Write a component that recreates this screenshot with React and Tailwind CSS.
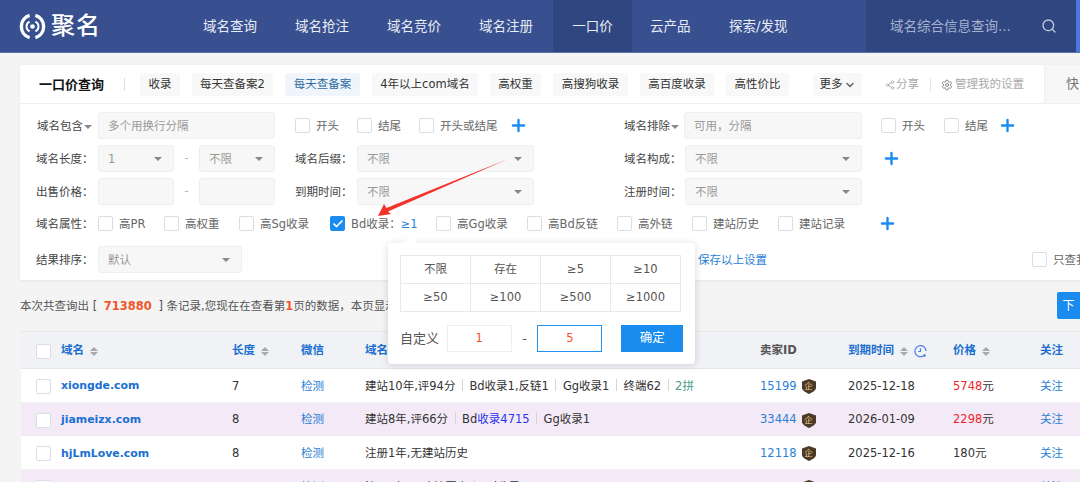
import React from "react";
import { Search, ChevronDown, Share2, Settings, Plus, Check } from "lucide-react";

const FONT = "font-['DejaVu_Sans','Noto_Sans_CJK_SC',sans-serif]";

function Box({ checked }) {
  return checked ? (
    <span className="flex h-[15px] w-[15px] shrink-0 items-center justify-center rounded-[2px] bg-[#1a8cf0]">
      <Check size={12} strokeWidth={3.5} className="text-white" />
    </span>
  ) : (
    <span className="block h-[15px] w-[15px] shrink-0 rounded-[2px] border border-[#d9dee6] bg-white" />
  );
}

function CheckItem({ label, className = "" }) {
  return (
    <span className={`flex items-center gap-[6px] text-[11.5px] text-[#666] ${className}`}>
      <Box />
      <span className="whitespace-nowrap pt-[3px]">{label}</span>
    </span>
  );
}

function Caret({ className = "" }) {
  return <span className={`inline-block h-0 w-0 border-x-[4px] border-t-[4px] border-x-transparent border-t-[#888] ${className}`} />;
}

function Field({ text = "", caret, className = "" }) {
  return (
    <span className={`flex h-[27px] items-center justify-between rounded-[3px] border border-[#eeeeee] bg-[#f7f7f7] pl-[9px] pr-[11px] text-[11.5px] text-[#999] ${className}`}>
      <span className="pt-[2px]">{text}</span>
      {caret && <Caret />}
    </span>
  );
}

function Label({ children, className = "" }) {
  return <span className={`whitespace-nowrap pt-[3px] text-[11.5px] text-[#444] ${className}`}>{children}</span>;
}

function Tag({ children, className = "" }) {
  return (
    <span className={`flex h-[23px] items-center justify-center rounded-[3px] pt-[2px] text-[11.5px] ${className}`}>
      {children}
    </span>
  );
}

function PlusIcon({ className = "" }) {
  return <Plus size={19} strokeWidth={3} className={`shrink-0 text-[#1a8cf0] ${className}`} />;
}

function Sort() {
  return (
    <span className="ml-[6px] inline-flex flex-col gap-[1px]">
      <span className="h-0 w-0 border-x-[4px] border-b-[4px] border-x-transparent border-b-[#aaa]" />
      <span className="h-0 w-0 border-x-[4px] border-t-[4px] border-x-transparent border-t-[#aaa]" />
    </span>
  );
}

function Badge() {
  return (
    <span className="relative ml-[5px] inline-flex h-[15px] w-[14px] items-center justify-center">
      <svg viewBox="0 0 14 15" className="absolute inset-0 h-full w-full">
        <path d="M7 0 L14 2.5 V9 C14 11.5 10 13.5 7 15 C4 13.5 0 11.5 0 9 V2.5 Z" fill="#4b3a28" />
      </svg>
      <span className="relative text-[8.5px] leading-none text-[#e7c48a]">企</span>
    </span>
  );
}

function Sep() {
  return <span className="mx-[6.5px] inline-block h-[12px] w-px bg-[#d5d5d5] align-[-1px]" />;
}

const COLS = "grid grid-cols-[40px_171px_69px_64px_395px_88px_105px_87px_1fr] items-center";

function Row({ name, len, info, id, date, price, alt }) {
  return (
    <div className={`${COLS} h-[33.7px] border-b border-dotted border-[#e4e4e4] pt-[2px] text-[11.5px] text-[#333] ${alt ? "bg-[#f4e9f6]" : "bg-white"}`}>
      <span className="pl-[15px]"><Box /></span>
      <span className="text-[10.9px] font-bold text-[#1a6fd0]">{name}</span>
      <span>{len}</span>
      <span className="text-[#2a7fd6]">检测</span>
      <span className="whitespace-nowrap">{info}</span>
      <span className="flex items-center text-[#2a7fd6]">{id}<Badge /></span>
      <span>{date}</span>
      <span>{price}</span>
      <span className="text-[#2a7fd6]">关注</span>
    </div>
  );
}

const NAV = ["域名查询", "域名抢注", "域名竞价", "域名注册"];

export default function App() {
  return (
    <div className={`${FONT} relative h-[482px] w-[1080px] overflow-hidden bg-[#f4f4f4]`}>
      <header className="flex h-[53px] items-stretch border-b border-[#5b71a8] bg-[#38508f] text-[#e9edf6]">
        <div className="flex w-[185px] items-center pl-[19px]">
          <svg viewBox="0 0 28 28" className="h-[27px] w-[27px]" fill="none" stroke="#fff">
            <path d="M11 2.5 A12 12 0 0 0 11 25.5" strokeWidth="3.5" />
            <path d="M17 2.5 A12 12 0 0 1 17 25.5" strokeWidth="3.5" />
            <path d="M11 9 A5.5 5.5 0 0 0 11 19" strokeWidth="2" />
            <path d="M17 9 A5.5 5.5 0 0 1 17 19" strokeWidth="2" />
            <circle cx="14" cy="14" r="2.4" fill="#fff" stroke="none" />
          </svg>
          <span className="ml-[5px] text-[24px] font-medium leading-none tracking-[1px] text-white">聚名</span>
        </div>
        {NAV.map((n) => (
          <span key={n} className="flex w-[92px] items-center justify-center pr-[2px] text-[13.5px]">{n}</span>
        ))}
        <span className="flex w-[79px] items-center justify-center bg-[#2f4680] text-[13.5px]">一口价</span>
        <span className="ml-[18px] flex w-[41px] items-center text-[13.5px]">云产品</span>
        <span className="ml-[38px] flex w-[61px] items-center whitespace-nowrap text-[13.5px]">探索/发现</span>
        <div className="ml-[76px] flex w-[210px] items-center justify-between bg-[#2f4680] pl-[24px] pr-[19px] text-[13.5px] text-[#a6b2cf]">
          <span className="whitespace-nowrap">域名综合信息查询...</span>
          <Search size={16} strokeWidth={2} className="shrink-0 text-[#c3cbe0]" />
        </div>
        <span className="w-[4px] bg-[#4a77e0]" />
      </header>

      <section className="ml-[20px] mt-[12px] h-[215px] bg-white shadow-[0_1px_3px_rgba(0,0,0,0.06)]">
        <div className="flex h-[39px] items-center border-b border-[#eeeeee] pl-[19px]">
          <span className="w-[85px] pt-[2px] text-[13px] font-bold text-[#111]">一口价查询</span>
          <span className="h-[13px] w-px bg-[#ddd]" />
          <div className="ml-[15px] flex gap-[12px]">
            <Tag className="w-[40px] bg-[#f8f8f8] text-[#333]">收录</Tag>
            <Tag className="w-[81px] bg-[#f8f8f8] text-[#333]">每天查备案2</Tag>
            <Tag className="w-[75px] bg-[#f0f5fb] text-[#2e6da4]">每天查备案</Tag>
            <Tag className="w-[106px] bg-[#f8f8f8] text-[#333]">4年以上com域名</Tag>
            <Tag className="w-[51px] bg-[#f8f8f8] text-[#333]">高权重</Tag>
            <Tag className="w-[75px] bg-[#f8f8f8] text-[#333]">高搜狗收录</Tag>
            <Tag className="w-[74px] bg-[#f8f8f8] text-[#333]">高百度收录</Tag>
            <Tag className="w-[63px] bg-[#f8f8f8] text-[#333]">高性价比</Tag>
          </div>
          <Tag className="ml-[24px] w-[49px] bg-[#f8f8f8] text-[#333]">更多<ChevronDown size={12} strokeWidth={3} className="ml-[1px] text-[#666]" /></Tag>
          <span className="ml-[23px] flex items-center pt-[2px] text-[11.5px] text-[#aaa]"><Share2 size={10} className="mr-[1px]" />分享</span>
          <span className="mx-[10.5px] h-[13px] w-px bg-[#e5e5e5]" />
          <span className="flex items-center whitespace-nowrap pt-[2px] text-[11.5px] text-[#aaa]"><Settings size={12} className="mr-[2px] text-[#888]" />管理我的设置</span>
          <span className="ml-[20px] flex h-full flex-1 items-center border-l border-[#eeeeee] bg-[#f7f7f7] pl-[21px] text-[13px] text-[#777]">快</span>
        </div>

        <div className="grid grid-cols-[259px_329px_1fr] gap-y-[6px] pl-[16px] pt-[8px]">
          <div className="flex items-center">
            <Label className="flex w-[62px] items-center pl-[1px]">域名包含<Caret className="ml-[1px]" /></Label>
            <Field text="多个用换行分隔" className="w-[177px]" />
          </div>
          <div className="flex items-center">
            <CheckItem label="开头" className="w-[62px]" />
            <CheckItem label="结尾" className="w-[62px]" />
            <CheckItem label="开头或结尾" className="w-[92px]" />
            <PlusIcon className="-ml-[2px]" />
          </div>
          <div className="flex items-center">
            <Label className="flex w-[60px] items-center">域名排除<Caret className="ml-[1px]" /></Label>
            <Field text="可用，分隔" className="w-[178px]" />
            <CheckItem label="开头" className="ml-[19px] w-[63px]" />
            <CheckItem label="结尾" className="w-[56px]" />
            <PlusIcon className="-ml-[2px]" />
          </div>

          <div className="flex items-center">
            <Label className="w-[62px]">域名长度：</Label>
            <Field text="1" caret className="w-[76px]" />
            <span className="w-[25px] text-center text-[11px] text-[#aaa]">-</span>
            <Field text="不限" caret className="w-[76px]" />
          </div>
          <div className="flex items-center">
            <Label className="w-[62px]">域名后缀：</Label>
            <Field text="不限" caret className="w-[177px]" />
          </div>
          <div className="flex items-center">
            <Label className="w-[61px]">域名构成：</Label>
            <Field text="不限" caret className="w-[177px]" />
            <PlusIcon className="ml-[20px]" />
          </div>

          <div className="flex items-center">
            <Label className="w-[62px]">出售价格：</Label>
            <Field className="w-[76px]" />
            <span className="w-[25px] text-center text-[11px] text-[#aaa]">-</span>
            <Field className="w-[76px]" />
          </div>
          <div className="flex items-center">
            <Label className="w-[62px]">到期时间：</Label>
            <Field text="不限" caret className="w-[177px]" />
          </div>
          <div className="flex items-center">
            <Label className="w-[61px]">注册时间：</Label>
            <Field text="不限" caret className="w-[177px]" />
          </div>
        </div>

        <div className="mt-[11px] flex h-[15px] items-center pl-[16px]">
          <Label className="w-[62px]">域名属性：</Label>
          <CheckItem label="高PR" className="w-[66px]" />
          <CheckItem label="高权重" className="w-[75px]" />
          <CheckItem label="高Sg收录" className="w-[91px]" />
          <span className="flex w-[106px] items-center gap-[6px] text-[11.5px] text-[#666]">
            <Box checked />
            <span className="whitespace-nowrap pt-[3px]">Bd收录：<span className="text-[#2a7fd6]">≥1</span></span>
          </span>
          <CheckItem label="高Gg收录" className="w-[91px]" />
          <CheckItem label="高Bd反链" className="w-[90px]" />
          <CheckItem label="高外链" className="w-[75px]" />
          <CheckItem label="建站历史" className="w-[86px]" />
          <CheckItem label="建站记录" className="w-[102px]" />
          <PlusIcon className="-ml-[2px]" />
        </div>

        <div className="mt-[15px] flex items-center pl-[16px]">
          <Label className="w-[62px] shrink-0">结果排序：</Label>
          <Field text="默认" caret className="w-[144px] shrink-0" />
          <span className="ml-[456px] w-[334px] shrink-0 pt-[2px] text-[11.5px] text-[#2a7fd6]">保存以上设置</span>
          <CheckItem label="只查我的" className="shrink-0" />
        </div>
      </section>

      <div className="mt-[12px] flex h-[27px] items-center pl-[20px] text-[11.5px] text-[#555]">
        <span className="whitespace-nowrap pt-[2px]">本次共查询出 [ <b className="mx-[3px] text-[#f0562a]">713880</b> ] 条记录,您现在在查看第<b className="text-[#f0562a]">1</b>页的数据，本页显示</span>
        <span className="ml-auto flex h-[27px] w-[23px] items-center justify-center rounded-l-[2px] bg-[#1a8cf0] text-[12px] text-white">下</span>
      </div>

      <section className="ml-[21px] mt-[12px] border-t border-[#e8e8e8]">
        <div className={`${COLS} h-[37px] border-b border-[#e6e6e6] bg-[#f1f2f5] pt-[2px] text-[11.5px] font-bold text-[#1a6fd0]`}>
          <span className="pl-[15px]"><Box /></span>
          <span className="flex items-center">域名<Sort /></span>
          <span className="flex items-center">长度<Sort /></span>
          <span>微信</span>
          <span>域名</span>
          <span className="text-[#555]">卖家ID</span>
          <span className="flex items-center">到期时间<Sort />
            <svg viewBox="0 0 14 14" className="ml-[6px] h-[13px] w-[13px]" fill="none" stroke="#4a7de8" strokeWidth="1.3">
              <path d="M12 10 A6 6 0 1 1 13 6.5" />
              <path d="M7 3.5 V7 H4.5" />
              <circle cx="11.5" cy="11.5" r="1.2" fill="#4a7de8" stroke="none" />
            </svg>
          </span>
          <span className="flex items-center">价格<Sort /></span>
          <span>关注</span>
        </div>
        <Row
          name="xiongde.com" len="7" id="15199" date="2025-12-18"
          price={<><span className="text-[#f0262a]">5748</span>元</>}
          info={<>建站10年,评94分<Sep />Bd收录1,反链1<Sep />Gg收录1<Sep />终端62<Sep /><span className="text-[#4f9a86]">2拼</span></>}
        />
        <Row
          alt name="jiameizx.com" len="8" id="33444" date="2026-01-09"
          price={<><span className="text-[#f0262a]">2298</span>元</>}
          info={<>建站8年,评66分<Sep />Bd<span className="text-[#2a35f0]">收录4715</span><Sep />Gg收录1</>}
        />
        <Row name="hjLmLove.com" len="8" id="12118" date="2025-12-16" price="180元" info="注册1年,无建站历史" />
        <Row
          alt name="xiaoju8.com" len="7" id="15199" date="2025-12-18" price="880元"
          info={<>注册1年,无建站历史<Sep />Bd收录1</>}
        />
      </section>

      {/* Popover over the form */}
      <div className="absolute left-[388px] top-[243px] h-[121px] w-[307px] rounded-[4px] bg-white px-[12px] pt-[12px] shadow-[0_1px_8px_rgba(0,0,0,0.15)]">
        <span className="absolute left-[17px] top-[-5px] h-[10px] w-[10px] rotate-45 bg-white" />
        <div className="grid w-[281px] grid-cols-4 border-l border-t border-[#e6e9ee] text-[11.5px] text-[#555]">
          {["不限", "存在", "≥5", "≥10", "≥50", "≥100", "≥500", "≥1000"].map((t) => (
            <span key={t} className="flex h-[28px] items-center justify-center border-b border-r border-[#e6e9ee]">{t}</span>
          ))}
        </div>
        <div className="mt-[13px] flex items-center text-[13px] text-[#555]">
          <span className="w-[47px] whitespace-nowrap">自定义</span>
          <span className="flex h-[27px] w-[65px] items-center justify-center border border-[#eeeeee] text-[11.5px] text-[#f7502e]">1</span>
          <span className="w-[26px] text-center">-</span>
          <span className="flex h-[27px] w-[65px] items-center justify-center border-[1.5px] border-[#2093f0] text-[11.5px] text-[#f7502e]">5</span>
          <span className="ml-[19px] flex h-[27px] w-[62px] items-center justify-center bg-[#1a8cf0] text-[12.5px] text-white">确定</span>
        </div>
      </div>

      {/* Red annotation arrow */}
      <svg className="pointer-events-none absolute left-[360px] top-[150px] h-[80px] w-[160px]" viewBox="0 0 160 80">
        <path d="M148 9 L28 61.5 L31 64 L18 66 L24 54 L26.5 58 Z" fill="#f3332a" />
      </svg>
    </div>
  );
}
